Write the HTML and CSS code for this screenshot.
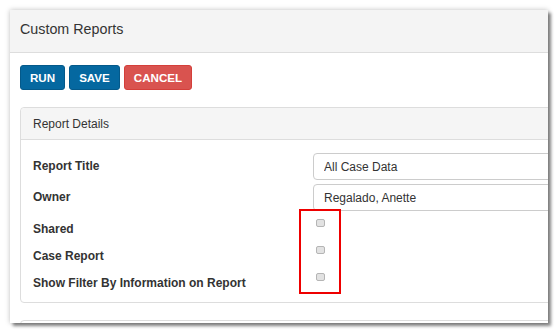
FILE: index.html
```html
<!DOCTYPE html>
<html lang="en">
<head>
    <meta charset="UTF-8">
    <title>Custom Reports</title>
    <link rel="stylesheet" href="styles.css">
</head>
<body>
    <div class="window">
        <div class="window-header">Custom Reports</div>

        <div class="window-body">
            <!-- Actions -->
            <div class="actions">
                <button class="btn btn-primary">RUN</button>
                <button class="btn btn-primary">SAVE</button>
                <button class="btn btn-danger">CANCEL</button>
            </div>

            <!-- Report details panel -->
            <div class="panel">
                <div class="panel-heading">Report Details</div>
                <div class="panel-body">
                    <div class="form-row">
                        <label class="form-label">Report Title</label>
                        <input class="form-input" type="text" value="All Case Data">
                    </div>
                    <div class="form-row">
                        <label class="form-label">Owner</label>
                        <input class="form-input" type="text" value="Regalado, Anette">
                    </div>
                    <div class="check-row">
                        <label class="form-label">Shared</label>
                        <input class="check" type="checkbox">
                    </div>
                    <div class="check-row">
                        <label class="form-label">Case Report</label>
                        <input class="check" type="checkbox">
                    </div>
                    <div class="check-row">
                        <label class="form-label">Show Filter By Information on Report</label>
                        <input class="check" type="checkbox">
                    </div>
                </div>
                <!-- highlight around checkboxes -->
                <div class="highlight"></div>
            </div>

            <div class="panel panel-next"></div>
        </div>
    </div>
</body>
</html>
```

FILE: styles.css
```css
body {
    margin: 0;
    padding: 10px;
    background-color: #fff;
    font-family: Arial, "Liberation Sans", sans-serif;
    color: #333;
}

.window {
    width: 538px;
    height: 313px;
    overflow: hidden;
    background-color: #fff;
    box-shadow: 3px 3px 3px rgba(0, 0, 0, 0.45), 0 0 5px rgba(0, 0, 0, 0.25);
}

.window-header {
    height: 42px;
    line-height: 38px;
    padding-left: 10px;
    font-size: 14.3px;
    background-color: #f4f4f4;
    border-bottom: 1px solid #ddd;
}

.window-body {
    padding: 12px 0 0 10px;
}

.actions {
    display: flex;
    gap: 4px;
    margin-bottom: 17px;
}

.btn {
    height: 25px;
    padding: 0 9px;
    border: 1px solid transparent;
    border-radius: 3px;
    color: #fff;
    font-family: Arial, "Liberation Sans", sans-serif;
    font-size: 11.6px;
    font-weight: bold;
    cursor: pointer;
}

.btn-primary {
    background-color: #0568a0;
    border-color: #04598a;
}

.btn-danger {
    background-color: #d9534f;
    border-color: #d43f3a;
}

.panel {
    position: relative;
    width: 600px;
    border: 1px solid #ddd;
    border-radius: 4px;
}

.panel-heading {
    height: 31px;
    line-height: 32px;
    padding-left: 12px;
    font-size: 12px;
    background-color: #f5f5f5;
    border-bottom: 1px solid #ddd;
    border-radius: 4px 4px 0 0;
}

.panel-body {
    padding: 13px 0 6px 12px;
}

.form-row {
    display: flex;
    align-items: center;
    height: 27px;
    margin-bottom: 4px;
}

.check-row {
    display: flex;
    align-items: flex-start;
    height: 27px;
}

.form-label {
    width: 280px;
    flex: none;
    font-size: 12px;
    font-weight: bold;
    line-height: 29px;
}

.form-input {
    flex: 1;
    height: 27px;
    box-sizing: border-box;
    padding: 0 10px;
    border: 1px solid #ccc;
    border-radius: 4px;
    font-family: Arial, "Liberation Sans", sans-serif;
    font-size: 12px;
    color: #333;
}

.check {
    appearance: none;
    width: 9px;
    height: 8px;
    margin: 4px 0 0 3px;
    background-color: #e2e2e2;
    border: 1px solid #b5b5b5;
    border-radius: 2px;
}

.highlight {
    position: absolute;
    left: 278px;
    top: 101px;
    width: 38px;
    height: 81px;
    border: 2px solid #e00;
}

.panel-next {
    height: 40px;
    margin-top: 17px;
}
```
